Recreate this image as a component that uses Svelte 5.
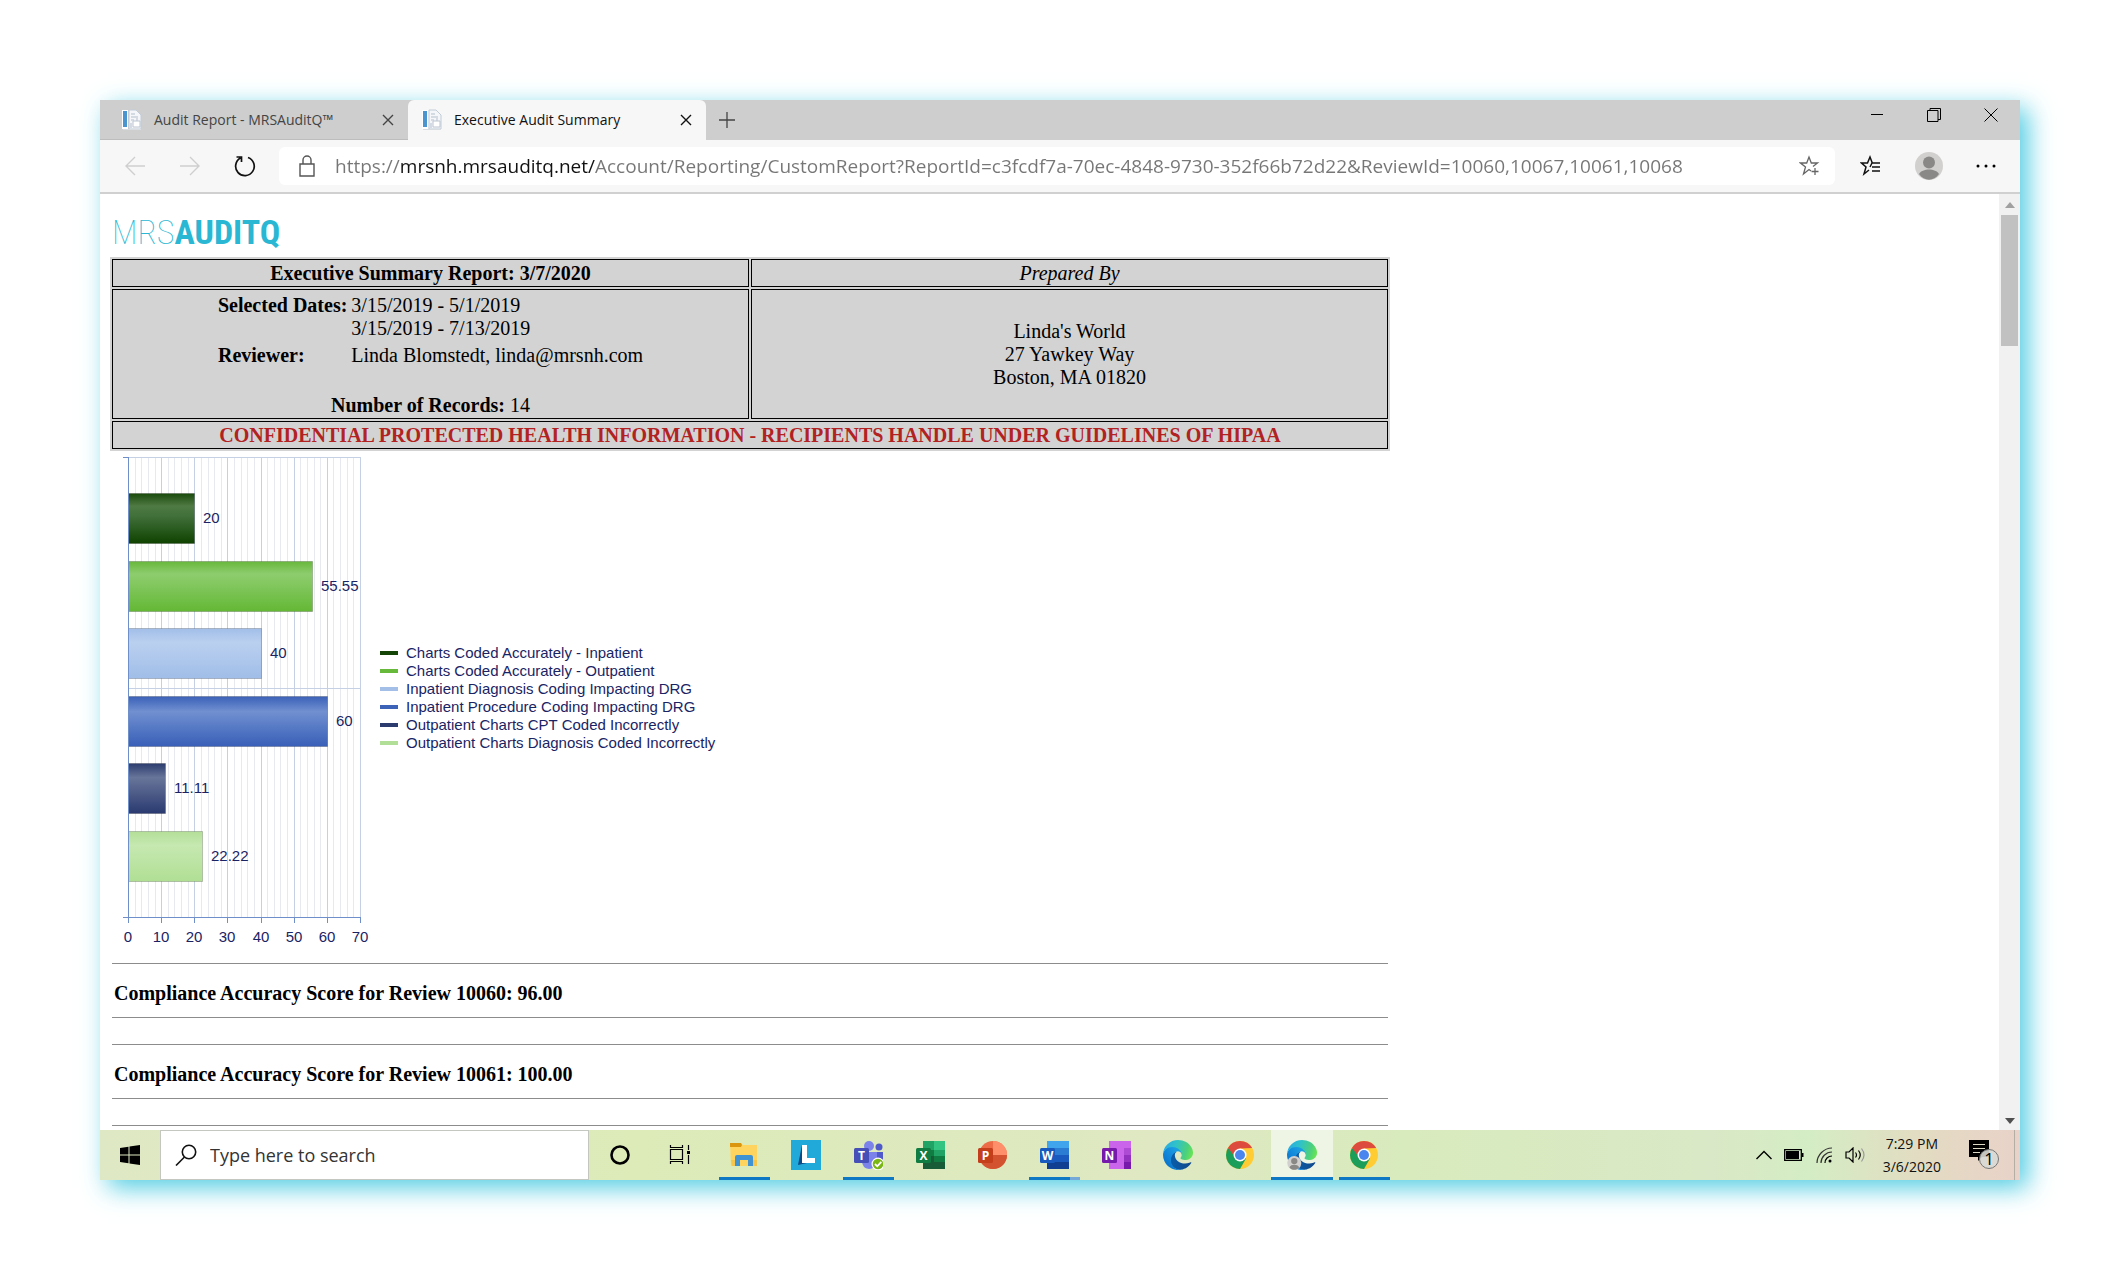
<script>
  const tabs = [
    { title: 'Audit Report - MRSAuditQ™', active: false },
    { title: 'Executive Audit Summary', active: true }
  ]

  let url = $state('https://mrsnh.mrsauditq.net/Account/Reporting/CustomReport?ReportId=c3fcdf7a-70ec-4848-9730-352f66b72d22&ReviewId=10060,10067,10061,10068')

  const series = [
    { label: 'Charts Coded Accurately - Inpatient', value: 20, fill: 'darkgreen', color: '#144506' },
    { label: 'Charts Coded Accurately - Outpatient', value: 55.55, fill: 'green', color: '#67b93b' },
    { label: 'Inpatient Diagnosis Coding Impacting DRG', value: 40, fill: 'sky', color: '#a3bfe8' },
    { label: 'Inpatient Procedure Coding Impacting DRG', value: 60, fill: 'blue', color: '#3d63b8' },
    { label: 'Outpatient Charts CPT Coded Incorrectly', value: 11.11, fill: 'navy', color: '#2b3b6e' },
    { label: 'Outpatient Charts Diagnosis Coded Incorrectly', value: 22.22, fill: 'mint', color: '#b2df97' }
  ]

  // plot area of the bar chart
  const plot = { x: 18, y: 6, width: 232, height: 460 }
  const xAt = (value) => plot.x + Math.round(value * plot.width / 70)
  const barY = (i) => plot.y + 36 + Math.round(i * 67.6)
  const minor = Array.from({ length: 36 }, (_, i) => i * 2)
  const major = [0, 10, 20, 30, 40, 50, 60, 70]

  const scores = [
    { review: 10060, score: '96.00' },
    { review: 10061, score: '100.00' }
  ]

  const apps = [
    { name: 'Cortana', icon: 'cortana' },
    { name: 'Task View', icon: 'taskview' },
    { name: 'File Explorer', icon: 'explorer', open: true },
    { name: 'Lists', icon: 'lists' },
    { name: 'Teams', icon: 'teams', open: true },
    { name: 'Excel', icon: 'excel' },
    { name: 'PowerPoint', icon: 'powerpoint' },
    { name: 'Word', icon: 'word', open: true, stacked: true },
    { name: 'OneNote', icon: 'onenote' },
    { name: 'Edge', icon: 'edge' },
    { name: 'Chrome', icon: 'chrome' },
    { name: 'Edge, Profile 1', icon: 'edgeprofile', open: true, current: true },
    { name: 'Chrome, window', icon: 'chrome', open: true }
  ]
</script>

<svelte:head>
  <title>Executive Audit Summary</title>
</svelte:head>

{#snippet favicon()}
  <svg class="favicon" viewBox="0 0 20 22" aria-hidden="true">
    <path d="M0 1h6v19H0z" fill="#fff" />
    <path d="M1 2h4v16H1z" fill="#4a95cf" />
    <path d="M7 1h7l5 5v14H7z" fill="#f4f6f9" stroke="#c2ccd8" />
    <path d="M9 5h4M9 8h7M9 11h3M9 14v5M15 9v3" stroke="#b4bfce" fill="none" />
    <path d="M11 12h7v6h-7z" fill="#fff" stroke="#bcc5d0" />
    <path d="M1 20.500h18" stroke="#d9dde2" />
  </svg>
{/snippet}

{#snippet cross()}
  <svg width="12" height="12" viewBox="0 0 12 12" aria-hidden="true">
    <path d="M1 1l10 10M11 1L1 11" stroke="currentColor" stroke-width="1.4" />
  </svg>
{/snippet}

{#snippet edge()}
  <path fill="url(#edge-a)" d="M235.68 190.11a93.73 93.73 0 0 1-10.54 4.71 101.87 101.87 0 0 1-35.9 6.46c-47.32 0-88.54-32.55-88.54-74.32a31.48 31.48 0 0 1 16.43-27.63c-42.8 1.8-53.8 46.4-53.8 72.53 0 73.88 68.09 81.37 82.76 81.37 7.91 0 19.84-2.3 27-4.56l1.31-.44a128.34 128.34 0 0 0 66.6-52.8 4 4 0 0 0-5.32-5.32z" />
  <path fill="url(#edge-b)" d="M105.73 241.42a79.2 79.2 0 0 1-22.74-21.34 80.72 80.72 0 0 1 29.53-120c3.12-1.47 8.45-4.13 15.54-4a32.35 32.35 0 0 1 25.69 13 31.88 31.88 0 0 1 6.36 18.66c0-.21 24.46-79.6-80-79.6-43.9 0-80 41.66-80 78.21a130.15 130.15 0 0 0 12.11 56 128 128 0 0 0 156.38 67.11 75.55 75.55 0 0 1-62.78-8z" />
  <path fill="url(#edge-c)" d="M152.33 148.86c-.81 1.05-3.3 2.5-3.3 5.66 0 2.61 1.7 5.12 4.72 7.23 14.38 10 41.49 8.68 41.56 8.68a59.56 59.56 0 0 0 30.27-8.35A61.38 61.38 0 0 0 256 109.23c.26-22.41-8-37.31-11.34-43.91C223.47 23.87 177.72 0 128 0A128 128 0 0 0 0 126.2c.48-36.54 36.8-66.05 80-66.05 3.5 0 23.46.34 42 10.07 16.34 8.58 24.9 18.94 30.85 29.21 6.18 10.67 7.28 24.15 7.28 29.52s-2.74 13.33-7.8 19.91z" />
{/snippet}

{#snippet badge(letter, color)}
  <rect x="1" y="8" width="15" height="15" rx="1.5" fill={color} />
  <text x="8.5" y="20" class="letter">{letter}</text>
{/snippet}

<!-- gradients shared by the chart and the taskbar icons -->
<svg class="defs" width="0" height="0" aria-hidden="true">
  <defs>
    <linearGradient id="darkgreen" x2="0" y2="1">
      <stop offset="0" stop-color="#1a4a0c" /><stop offset=".25" stop-color="#4f7a43" /><stop offset=".45" stop-color="#41703a" /><stop offset="1" stop-color="#0f4200" />
    </linearGradient>
    <linearGradient id="green" x2="0" y2="1">
      <stop offset="0" stop-color="#68b83c" /><stop offset=".25" stop-color="#8ecd6e" /><stop offset=".5" stop-color="#80c65c" /><stop offset="1" stop-color="#64b835" />
    </linearGradient>
    <linearGradient id="sky" x2="0" y2="1">
      <stop offset="0" stop-color="#a2bee8" /><stop offset=".28" stop-color="#bad0ef" /><stop offset="1" stop-color="#a0bde8" />
    </linearGradient>
    <linearGradient id="blue" x2="0" y2="1">
      <stop offset="0" stop-color="#3b61b8" /><stop offset=".3" stop-color="#7190d0" /><stop offset="1" stop-color="#385fb8" />
    </linearGradient>
    <linearGradient id="navy" x2="0" y2="1">
      <stop offset="0" stop-color="#2b3c6e" /><stop offset=".28" stop-color="#68759a" /><stop offset="1" stop-color="#2a3a70" />
    </linearGradient>
    <linearGradient id="mint" x2="0" y2="1">
      <stop offset="0" stop-color="#b3df98" /><stop offset=".28" stop-color="#c6e8b1" /><stop offset="1" stop-color="#b0df94" />
    </linearGradient>
    <linearGradient id="edge-a" x1=".2" x2="1" y2="0">
      <stop offset="0" stop-color="#0c59a4" /><stop offset="1" stop-color="#114a8b" />
    </linearGradient>
    <linearGradient id="edge-b" x1=".8" y1=".3" x2=".1" y2="1">
      <stop offset="0" stop-color="#1b9de2" /><stop offset=".5" stop-color="#0f84d8" /><stop offset="1" stop-color="#0969c0" />
    </linearGradient>
    <linearGradient id="edge-c" x1="0" y1=".3" x2="1" y2=".5">
      <stop offset="0" stop-color="#2aa9e4" /><stop offset=".4" stop-color="#2fc2c9" /><stop offset=".8" stop-color="#4cd07d" /><stop offset="1" stop-color="#66e356" />
    </linearGradient>
  </defs>
</svg>

<div class="page">
  <div class="window">
    <header class="tabs">
      {#each tabs as tab}
        <div class="tab" class:active={tab.active}>
          {@render favicon()}
          <span class="title">{tab.title}</span>
          <button aria-label="Close tab">{@render cross()}</button>
        </div>
      {/each}
      <button class="new" aria-label="New tab">
        <svg width="18" height="18" viewBox="0 0 18 18"><path d="M9 1v16M1 9h16" stroke="#444" stroke-width="1.3" /></svg>
      </button>
      <div class="controls">
        <button aria-label="Minimize">
          <svg width="14" height="14" viewBox="0 0 14 14"><path d="M1 6.500h12" stroke="#000" /></svg>
        </button>
        <button aria-label="Restore">
          <svg width="14" height="14" viewBox="0 0 14 14" fill="none" stroke="#000"><path d="M.5 2.500h10.500v11H.5zM3 2.500v-2h10.500v11H11" /></svg>
        </button>
        <button aria-label="Close">
          <svg width="14" height="14" viewBox="0 0 14 14"><path d="M.5.5l13 13M13.500.5l-13 13" stroke="#000" /></svg>
        </button>
      </div>
    </header>

    <nav class="toolbar">
      <button aria-label="Back">
        <svg width="22" height="22" viewBox="0 0 22 22" fill="none" stroke="#cfcfcf" stroke-width="1.4"><path d="M21 11H2M11 2l-9 9 9 9" /></svg>
      </button>
      <button aria-label="Forward">
        <svg width="22" height="22" viewBox="0 0 22 22" fill="none" stroke="#cfcfcf" stroke-width="1.4"><path d="M1 11h19M11 2l9 9-9 9" /></svg>
      </button>
      <button aria-label="Refresh">
        <svg width="22" height="22" viewBox="0 0 22 22" fill="none" stroke="#111" stroke-width="1.7"><path d="M14 2.500a9.300 9.300 0 1 1-7.500.6M2.500 2h5v5" /></svg>
      </button>
      <div class="address">
        <svg width="16" height="22" viewBox="0 0 16 22" fill="none" stroke="#555" stroke-width="1.4" aria-hidden="true"><path d="M1 9h14v12H1zM4 9V5a4 4 0 0 1 8 0v4" /></svg>
        <input type="text" aria-label="Address" bind:value={url}>
        <button aria-label="Add to favorites">
          <svg width="22" height="22" viewBox="0 0 22 22" fill="none" stroke="#666" stroke-width="1.3"><path d="M12 16l-2-1.500L4.500 19l2-7L1.500 8h6.200L10 2l2.300 6h6.200L14 11.500M16 13v7M12.500 16.500h7" /></svg>
        </button>
      </div>
      <button aria-label="Favorites">
        <svg width="22" height="22" viewBox="0 0 22 22" fill="none" stroke="#111" stroke-width="1.5"><path d="M9 15l-5 4 2-7-4.500-4h6L10 2l2.300 6H20M12 12h8M12 16h8M12 8l-2 4" /></svg>
      </button>
      <button class="profile" aria-label="Profile">
        <svg width="28" height="28" viewBox="0 0 28 28"><circle cx="14" cy="14" r="14" fill="#d2d0ce" /><circle cx="14" cy="10.500" r="6" fill="#8a8886" /><path d="M4 22c3-6 17-6 20 0-5 7.500-15 7.500-20 0z" fill="#8a8886" /></svg>
      </button>
      <button aria-label="Settings and more">
        <svg width="20" height="4" viewBox="0 0 20 4"><circle cx="2" cy="2" r="1.500" /><circle cx="10" cy="2" r="1.500" /><circle cx="18" cy="2" r="1.500" /></svg>
      </button>
    </nav>

    <div class="viewport">
      <main>
        <h1 class="logo"><span>MRS</span>AUDITQ</h1>

        <table class="summary">
          <tbody>
            <tr>
              <th>Executive Summary Report: 3/7/2020</th>
              <td class="by">Prepared By</td>
            </tr>
            <tr class="details">
              <td>
                <table>
                  <tbody>
                    <tr>
                      <th>Selected Dates:</th>
                      <td>3/15/2019 - 5/1/2019<br>3/15/2019 - 7/13/2019</td>
                    </tr>
                    <tr>
                      <th>Reviewer:</th>
                      <td>Linda Blomstedt, linda@mrsnh.com</td>
                    </tr>
                  </tbody>
                </table>
                <p><b>Number of Records:</b> 14</p>
              </td>
              <td>Linda's World<br>27 Yawkey Way<br>Boston, MA 01820</td>
            </tr>
            <tr>
              <th class="warning" colspan="2">CONFIDENTIAL PROTECTED HEALTH INFORMATION - RECIPIENTS HANDLE UNDER GUIDELINES OF HIPAA</th>
            </tr>
          </tbody>
        </table>

        <div class="chart">
          <svg width="260" height="500" viewBox="0 0 260 500" role="img" aria-label="Bar chart of coding accuracy">
            {#each minor as v}
              <path class:major={v % 10 === 0} class="grid" d="M{xAt(v) + .5} {plot.y}v{plot.height}" />
            {/each}
            <path class="grid major" d="M18 6.500h232M18 237.500h232" />
            {#each series as s, i}
              <rect class="bar" x={plot.x + .5} y={barY(i) + .5} width={xAt(s.value) - plot.x} height="50" fill="url(#{s.fill})" />
              <text x={xAt(s.value) + 9} y={barY(i) + 30}>{s.value}</text>
            {/each}
            <path class="axis" d="M13 6.500h6M18.500 6v460M13 466.500h238" />
            {#each major as v}
              <path class="axis" d="M{xAt(v) + .5} 466v6" />
              <text x={xAt(v)} y="491" text-anchor="middle">{v}</text>
            {/each}
          </svg>
          <ul>
            {#each series as s}
              <li><i style="background: {s.color}"></i>{s.label}</li>
            {/each}
          </ul>
        </div>

        {#each scores as s}
          <hr>
          <h2>Compliance Accuracy Score for Review {s.review}: {s.score}</h2>
          <hr>
        {/each}
        <hr>
      </main>
      <div class="scrollbar">
        <svg width="10" height="6" viewBox="0 0 10 6"><path d="M0 6l5-6 5 6z" fill="#a0a0a0" /></svg>
        <div class="thumb"></div>
        <svg width="10" height="6" viewBox="0 0 10 6"><path d="M0 0l5 6 5-6z" fill="#505050" /></svg>
      </div>
    </div>

    <footer class="taskbar">
      <button class="start" aria-label="Start">
        <svg width="20" height="20" viewBox="0 0 20 20"><path d="M0 3l8.500-1.200v7.700H0zM9.500 1.600L20 0v9.500H9.500zM0 10.500h8.500v7.700L0 17zM9.500 10.500H20V20L9.500 18.400z" /></svg>
      </button>
      <label class="search">
        <svg width="22" height="22" viewBox="0 0 22 22" fill="none" stroke="#111" stroke-width="1.6" aria-hidden="true"><circle cx="14" cy="8" r="6.700" /><path d="M9.500 13L1 21.500" /></svg>
        <input type="search" placeholder="Type here to search" aria-label="Search">
      </label>

      <div class="apps">
        {#each apps as app}
          <button class:open={app.open} class:stacked={app.stacked} class:current={app.current} aria-label={app.name}>
            {#if app.icon === 'edge'}
              <svg width="30" height="30" viewBox="0 0 256 256">{@render edge()}</svg>
            {:else if app.icon === 'edgeprofile'}
              <svg width="30" height="30" viewBox="0 0 256 256">
                {@render edge()}
                <circle cx="62" cy="196" r="60" fill="#d2d0ce" />
                <circle cx="62" cy="180" r="27" fill="#8a8886" />
                <path d="M20 232c14-28 70-28 84 0-22 30-62 30-84 0z" fill="#8a8886" />
              </svg>
            {:else}
              <svg width="30" height="30" viewBox="0 0 30 30">
                {#if app.icon === 'cortana'}
                  <circle cx="15" cy="15" r="8.500" fill="none" stroke="#000" stroke-width="2.600" />
                {:else if app.icon === 'taskview'}
                  <path d="M3.500 9.500h12v10h-12zM3.500 5v2.500h12V5M3.500 24v-2.500h12V24M21.500 5v5M21.500 15v9" fill="none" stroke="#000" stroke-width="1.200" />
                  <path d="M20 11h3v3h-3z" />
                {:else if app.icon === 'explorer'}
                  <path d="M1 3h11l2 2h14v21H2z" fill="#ffd45e" />
                  <path d="M1 3h11l1 2-1 2H1z" fill="#d9960e" />
                  <path d="M6 26V17q0-2 2-2h14q2 0 2 2v9h-5v-6h-8v6z" fill="#3f93d2" />
                  <path d="M2 20h4v6H3zM24 20h4v6h-4z" fill="#f6c64d" />
                {:else if app.icon === 'lists'}
                  <path d="M0 0h30v30H0z" fill="#21a9da" />
                  <path d="M11 5L7 25l9-2z" fill="#0a4a86" />
                  <path d="M11 5h5v13h8v5H11z" fill="#fff" />
                {:else if app.icon === 'teams'}
                  <circle cx="16" cy="6" r="5" fill="#7b83eb" />
                  <circle cx="26" cy="7" r="3.500" fill="#5059c9" />
                  <path d="M20 12h10v9q-1 6-8 5z" fill="#5059c9" />
                  <path d="M9 12h15v9q-2 8-8 8-7-1-7-8z" fill="#7b83eb" />
                  {@render badge('T', '#464eb8')}
                  <circle cx="25" cy="24" r="6.500" fill="#fff" />
                  <circle cx="25" cy="24" r="5.300" fill="#7ab614" />
                  <path d="M22 24l2.300 2.300 4-4.500" fill="none" stroke="#fff" stroke-width="1.800" />
                {:else if app.icon === 'excel'}
                  <path d="M8 1h11v9H8z" fill="#21a366" /><path d="M19 1h11v9H19z" fill="#33c481" />
                  <path d="M8 10h11v6H8z" fill="#107c41" /><path d="M19 10h11v6H19z" fill="#21a366" />
                  <path d="M8 16h22v13H8z" fill="#185c37" /><path d="M19 16h11v6H19z" fill="#107c41" />
                  {@render badge('X', '#107c41')}
                {:else if app.icon === 'powerpoint'}
                  <circle cx="16" cy="15" r="14" fill="#ed6c47" />
                  <path d="M16 1a14 14 0 0 1 14 14H16z" fill="#ff8f6b" />
                  <path d="M2 15h28a14 14 0 0 1-28 0z" fill="#d35230" />
                  {@render badge('P', '#c43e1c')}
                {:else if app.icon === 'word'}
                  <path d="M8 1h22v7H8z" fill="#41a5ee" /><path d="M8 8h22v7H8z" fill="#2b7cd3" />
                  <path d="M8 15h22v7H8z" fill="#185abd" /><path d="M8 22h22v7H8z" fill="#103f91" />
                  {@render badge('W', '#185abd')}
                {:else if app.icon === 'onenote'}
                  <path d="M8 1h22v28H8z" fill="#ca64ea" /><path d="M23 8h7v7h-7z" fill="#ae4bd5" />
                  <path d="M23 15h7v7h-7z" fill="#9332bf" /><path d="M23 22h7v7h-7z" fill="#7719aa" />
                  {@render badge('N', '#7719aa')}
                {:else if app.icon === 'chrome'}
                  <circle cx="15" cy="15" r="14" fill="#fc3" />
                  <path d="M15 15L2.900 8A14 14 0 0 0 15 29l6-10.500z" fill="#1a9e5a" />
                  <path d="M15 15H8.500L2.900 8a14 14 0 0 1 24.300 0H15z" fill="#dd4b3e" />
                  <path d="M15 8.500h12.200L15 9z" fill="#dd4b3e" />
                  <circle cx="15" cy="15" r="6.500" fill="#fff" />
                  <circle cx="15" cy="15" r="5" fill="#4a86ee" />
                {/if}
              </svg>
            {/if}
          </button>
        {/each}
      </div>

      <div class="tray">
        <svg width="16" height="10" viewBox="0 0 16 10" fill="none" stroke="#000" stroke-width="1.400"><path d="M.5 9L8 1.500 15.500 9" /></svg>
        <svg width="20" height="12" viewBox="0 0 20 12"><path d="M.7.7h16.600v10.600H.7z" fill="none" stroke="#000" stroke-width="1.300" /><path d="M2 2h13v8H2zM18 4h1.500v4H18z" /></svg>
        <svg width="17" height="17" viewBox="0 0 17 17" fill="none" stroke="#000" stroke-width="1.200"><path d="M1 16C1 8 8 1 16 1M5 16C5 10 10 5 16 5" stroke="#333" /><path d="M9 16c0-4 3-7 7-7" /><circle cx="14" cy="14" r="1.500" fill="#000" stroke="none" /></svg>
        <svg width="20" height="16" viewBox="0 0 20 16" fill="none" stroke="#000" stroke-width="1.200"><path d="M1 5h3l4-4v14l-4-4H1zM10.500 5.500q2 2.500 0 5M13.500 3.500q3.500 4.500 0 9" /><path d="M16.500 1.500q5 6.500 0 13" stroke="#999" /></svg>
        <time>7:29 PM<br>3/6/2020</time>
        <button aria-label="Notifications">
          <svg width="30" height="30" viewBox="0 0 30 30">
            <path d="M0 0h20v17h-7l-4 4v-4H0z" />
            <path d="M4 4.500h12M4 8.500h12M4 12.500h7" stroke="#dcd9c5" stroke-width="1.200" />
            <circle cx="20" cy="19" r="9.500" fill="#d9d9d4" fill-opacity=".9" stroke="#777" />
            <text x="20" y="25" class="count">1</text>
          </svg>
        </button>
      </div>
    </footer>
  </div>
</div>

<style>
  :global(body) {
    margin: 0;
    background: #fff;
  }
  .page {
    box-sizing: border-box;
    height: 100vh;
    padding: 100px;
    font-family: "Open Sans", "Noto Sans", sans-serif;
  }
  .defs {
    position: absolute;
  }
  button {
    display: grid;
    place-items: center;
    padding: 0;
    border: 0;
    background: none;
    color: inherit;
    font: inherit;
  }
  .window {
    display: flex;
    flex-direction: column;
    height: 100%;
    background: #fff;
    box-shadow: 8px 8px 24px #52cde3;
  }

  .tabs {
    display: flex;
    flex: none;
    height: 40px;
    background: #cecece;
  }
  .tab {
    display: flex;
    align-items: center;
    gap: 12px;
    box-sizing: border-box;
    width: 308px;
    padding: 0 14px 0 22px;
    border-bottom: 1px solid #bdbdbd;
    color: #444;
    font-size: 14px;
  }
  .tab.active {
    width: 298px;
    padding-left: 14px;
    border-color: #f7f7f7;
    border-radius: 6px 6px 0 0;
    background: #f7f7f7;
    color: #111;
  }
  .title {
    flex: 1;
    white-space: nowrap;
  }
  .favicon {
    width: 20px;
    height: 22px;
  }
  .new {
    width: 42px;
  }
  .controls {
    display: flex;
    gap: 43px;
    height: 30px;
    margin-left: auto;
    padding-right: 22px;
  }

  .toolbar {
    display: flex;
    flex: none;
    align-items: center;
    gap: 33px;
    box-sizing: border-box;
    height: 54px;
    padding: 0 24px;
    border-bottom: 2px solid #d0d0d0;
    background: #f7f7f7;
  }
  .address {
    display: flex;
    flex: 1;
    align-items: center;
    gap: 20px;
    box-sizing: border-box;
    height: 38px;
    margin: 0 -8px 0 -10px;
    padding: 0 14px 0 20px;
    border-radius: 6px;
    background: #fff;
  }
  .address input {
    flex: 1;
    min-width: 0;
    padding: 0;
    border: 0;
    outline: 0;
    /* only the host is dark */
    background: linear-gradient(90deg, #767676 66px, #111 66px, #111 260px, #767676 260px);
    background-clip: text;
    color: transparent;
    font: 19px/28px "Open Sans", "Noto Sans", sans-serif;
  }

  .viewport {
    display: flex;
    flex: 1;
    justify-content: space-between;
    min-height: 0;
  }
  main {
    width: 1280px;
    padding: 18px 0 0 10px;
    overflow: hidden;
    color: #000;
    font: 20px/23px "Liberation Serif", "Times New Roman", serif;
  }
  .logo {
    margin: 0 0 5px 2px;
    color: #2ab7d3;
    font: 700 34px/40px "Roboto Condensed", "Open Sans Condensed", Roboto, sans-serif;
  }
  .logo span {
    font-weight: 100;
  }

  .summary {
    width: 100%;
    border-spacing: 2px;
    background: #d3d3d3;
    text-align: center;
    table-layout: fixed;
  }
  .summary > tbody > tr > * {
    height: 26px;
    padding: 0;
    border: 1px solid #000;
  }
  .summary .details > td {
    height: 128px;
  }
  .by {
    font-style: italic;
  }
  .details table {
    margin: 0 auto;
    border-spacing: 2px;
    text-align: left;
  }
  .details table :is(th, td) {
    padding: 1px;
    vertical-align: top;
  }
  .details p {
    margin: 24px 0 0;
  }
  .warning {
    color: #b22222;
  }

  .chart {
    display: flex;
    align-items: center;
    gap: 10px;
    color: #1a2464;
    font: 15px/18px "Liberation Sans", Arial, sans-serif;
  }
  .chart text {
    fill: #1a2464;
  }
  .grid {
    stroke: #e6eaf0;
  }
  .grid.major {
    stroke: #c6d0e4;
  }
  .axis {
    fill: none;
    stroke: #6f8fca;
  }
  .bar {
    stroke: #0003;
  }
  ul {
    margin: 0;
    padding: 0 0 6px;
    list-style: none;
  }
  li {
    display: flex;
    align-items: center;
    gap: 8px;
  }
  i {
    width: 18px;
    height: 4px;
  }

  hr {
    margin: 0 2px 26px;
    border: 0;
    border-top: 1px solid #8c8c8c;
  }
  .chart + hr {
    margin-top: 12px;
  }
  h2 {
    margin: -8px 4px 12px;
    font-size: 20px;
    line-height: 23px;
  }

  .scrollbar {
    display: flex;
    flex-direction: column;
    align-items: center;
    box-sizing: border-box;
    width: 21px;
    padding: 8px 0 6px;
    background: #f1f1f1;
  }
  .thumb {
    width: 17px;
    height: 131px;
    margin: 7px 0 auto;
    background: #c1c1c1;
  }

  .taskbar {
    display: flex;
    flex: none;
    height: 50px;
    background: linear-gradient(90deg, #dfe8c4, #dcebb8 28%, #dfe8c2 55%, #d8ebbd 68%, #d9e8c6 84%, #d4edc4 89%, #e3dbc2 95%, #e9d2c9);
    color: #111;
  }
  .start {
    width: 60px;
  }
  .search {
    display: flex;
    align-items: center;
    gap: 13px;
    box-sizing: border-box;
    width: 429px;
    padding-left: 14px;
    border: 1px solid #c4c6c0;
    background: #fff;
  }
  .search input {
    flex: 1;
    padding: 0;
    border: 0;
    outline: 0;
    background: none;
    font: 18px/24px "Open Sans", "Noto Sans", sans-serif;
  }
  .search input::placeholder {
    color: #333;
    opacity: 1;
  }
  .apps {
    display: flex;
  }
  .apps button {
    width: 62px;
    background-position: bottom;
    background-repeat: no-repeat;
    background-size: 51px 3px;
  }
  .open {
    background-image: linear-gradient(#0f78c4, #0f78c4);
  }
  .stacked {
    background-image: linear-gradient(90deg, #0f78c4 80%, #76a9d8 80%);
  }
  .apps .current {
    background-color: #eef5e4;
    background-size: 100% 3px;
  }
  .letter {
    fill: #fff;
    font: 700 12px "Open Sans", sans-serif;
    text-anchor: middle;
  }
  .tray {
    display: flex;
    align-items: center;
    gap: 12px;
    margin-left: auto;
    margin-right: 5px;
    padding-right: 15px;
    border-right: 1px solid #b5aea4;
  }
  .tray time {
    margin: 0 16px 0 6px;
    font-size: 14px;
    line-height: 23px;
    text-align: center;
  }
  .count {
    font: 17px "Open Sans", sans-serif;
    text-anchor: middle;
  }
</style>
